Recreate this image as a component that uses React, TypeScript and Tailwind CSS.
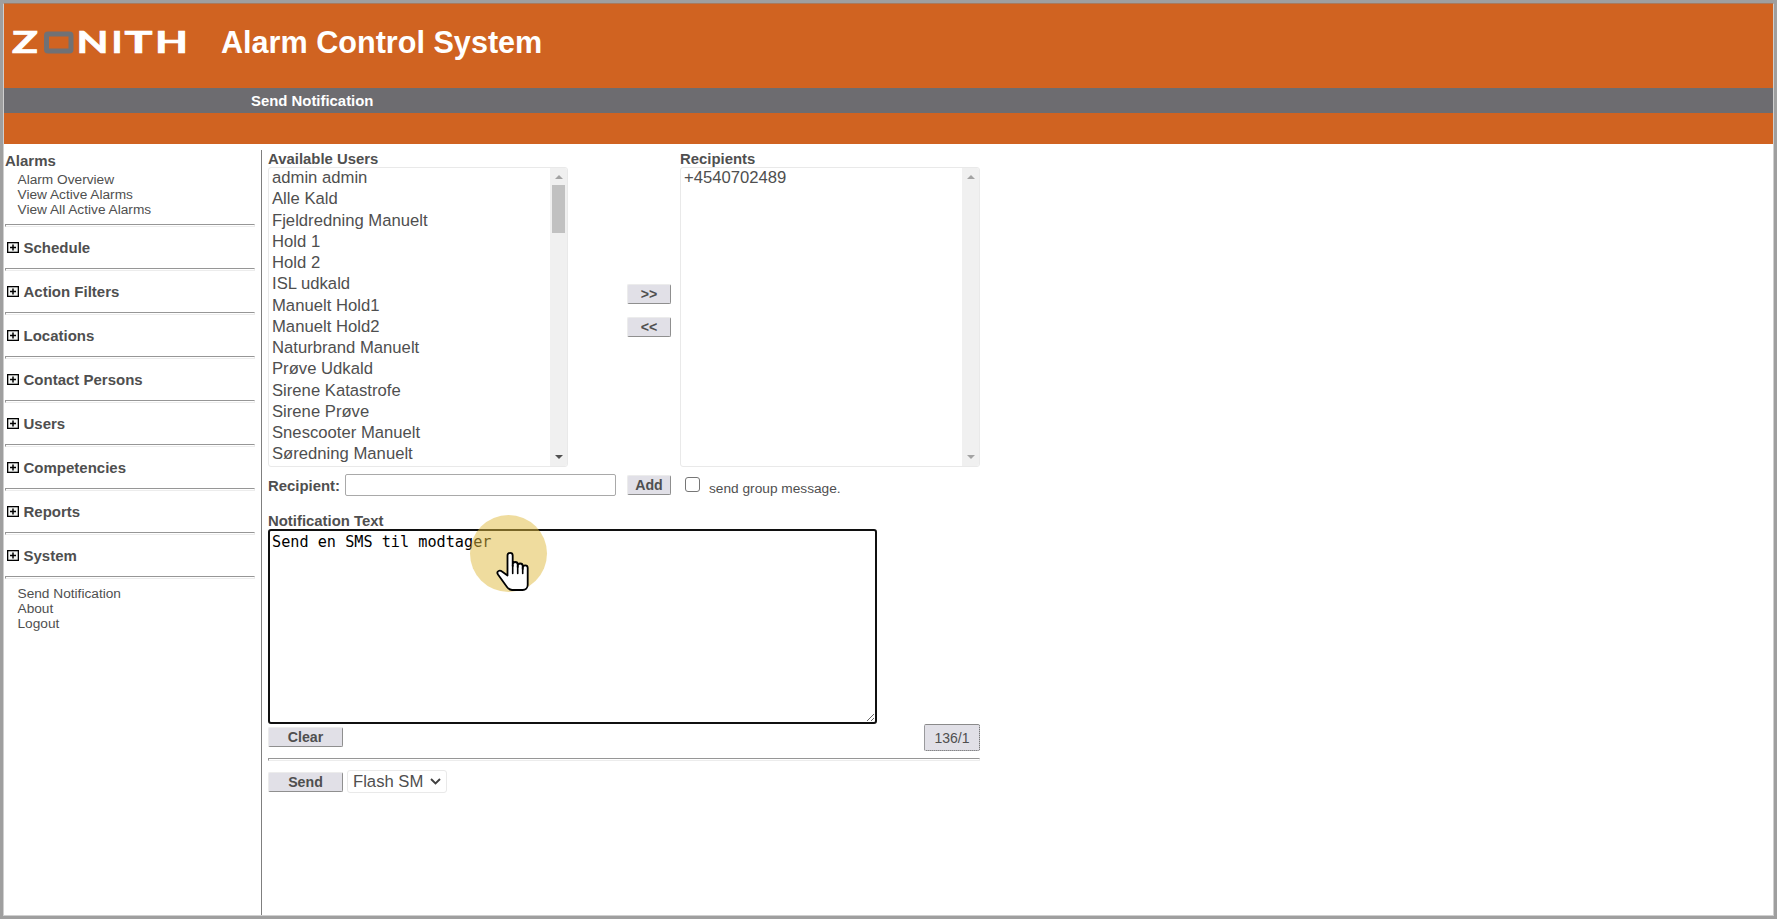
import React, { useState } from "react";

const SECTIONS = [
  "Schedule",
  "Action Filters",
  "Locations",
  "Contact Persons",
  "Users",
  "Competencies",
  "Reports",
  "System",
];

const USERS = [
  "admin admin",
  "Alle Kald",
  "Fjeldredning Manuelt",
  "Hold 1",
  "Hold 2",
  "ISL udkald",
  "Manuelt Hold1",
  "Manuelt Hold2",
  "Naturbrand Manuelt",
  "Prøve Udkald",
  "Sirene Katastrofe",
  "Sirene Prøve",
  "Snescooter Manuelt",
  "Søredning Manuelt",
];

function Logo() {
  return (
    <svg
      width="184"
      height="50"
      viewBox="-4 0 184 50"
      fill="#fff"
      stroke="#fff"
      strokeWidth="0.7"
      fontFamily="Lato, sans-serif"
      fontWeight="700"
      fontSize="30"
      aria-label="ZONITH"
    >
      <text x="0" y="36" textLength="26" lengthAdjust="spacingAndGlyphs">Z</text>
      <rect x="34.5" y="17" width="24.5" height="17" rx="1.5" fill="none" stroke="#707175" strokeWidth="5" />
      <text x="64.500" y="36" textLength="32" lengthAdjust="spacingAndGlyphs">N</text>
      <text x="99.500" y="36" textLength="11" lengthAdjust="spacingAndGlyphs">I</text>
      <text x="112.500" y="36" textLength="28" lengthAdjust="spacingAndGlyphs">T</text>
      <text x="143" y="36" textLength="33" lengthAdjust="spacingAndGlyphs">H</text>
    </svg>
  );
}

function Rule({ className = "" }: { className?: string }) {
  return (
    <div
      className={`h-[3px] shrink-0 border border-t-[#969696] border-r-[#ececec] border-b-[#ececec] border-l-[#969696] ${className}`}
    />
  );
}

function PlusBox() {
  return (
    <svg width="12" height="11" viewBox="0 0 12 11" className="shrink-0">
      <rect x="0.65" y="0.65" width="10.7" height="9.7" fill="#f4f6f4" stroke="#000" strokeWidth="1.3" />
      <path d="M3 5.5h6M6 2.500v6" stroke="#000" strokeWidth="1.5" />
    </svg>
  );
}

function Btn({ children, className = "" }: { children: React.ReactNode; className?: string }) {
  return (
    <button
      className={`flex h-5 items-center justify-center rounded-[2px] border border-t-[#ececec] border-r-[#8f8f8f] border-b-[#8f8f8f] border-l-[#ececec] bg-[#e1e0e7] pb-px text-[14.2px] leading-4 font-bold ${className}`}
    >
      {children}
    </button>
  );
}

function Heading({ children, className = "" }: { children: React.ReactNode; className?: string }) {
  return <h3 className={`pt-px text-[14.9px] leading-[16px] font-bold ${className}`}>{children}</h3>;
}

function ListBox({ items, scrollable }: { items: string[]; scrollable?: boolean }) {
  return (
    <div className="flex h-[300px] w-[300px] overflow-hidden rounded-[3px] border border-[#e9e9e9]">
      <ul className="flex-1 pl-[3px] text-[16.67px]">
        {items.map((item) => (
          <li key={item} className="h-[21.25px] leading-[19px] whitespace-nowrap">
            {item}
          </li>
        ))}
      </ul>
      <div className="flex w-[17px] flex-col items-center justify-between bg-[#f0f0f0] pt-[7px] pb-[7px]">
        <div className="flex flex-col items-center">
          <svg width="8" height="4" viewBox="0 0 8 4">
            <path d="M4 0l4 4H0z" fill="#a3a3a3" />
          </svg>
          {scrollable && <div className="mt-[6px] h-12 w-[13px] bg-[#c1c1c1]" />}
        </div>
        <svg width="8" height="4" viewBox="0 0 8 4">
          <path d="M0 0h8L4 4z" fill={scrollable ? "#505050" : "#a3a3a3"} />
        </svg>
      </div>
    </div>
  );
}

function Pointer() {
  return (
    <div className="pointer-events-none absolute top-[-14px] left-[202px] h-[78px] w-[78px]">
      <div className="h-[77px] w-[77px] rounded-full bg-[#e0b93d]/50" />
      <svg className="absolute top-[36px] left-[26px]" width="34" height="41" viewBox="0 0 34 41">
        <path
          d="M11.5 24.5V4.5a2.6 2.6 0 0 1 5.2 0V15v-1.500a2.500 2.500 0 0 1 5 0V16v-1a2.500 2.500 0 0 1 5 0v3-1.200a2.500 2.500 0 0 1 5 0V34a5 5 0 0 1-5 5H16a7 7 0 0 1-5-3L2 23.500c-2-3 1.500-5 4-3z"
          fill="#fff"
          stroke="#000"
          strokeWidth="1.8"
          strokeLinejoin="round"
        />
        <path d="M16.700 14v8.500M21.700 15v7.500M26.700 16v6.500" stroke="#000" strokeWidth="1.600" strokeLinecap="round" />
      </svg>
    </div>
  );
}

export default function App() {
  const [text, setText] = useState("Send en SMS til modtager");

  return (
    <div className="h-[919px] w-[1777px] overflow-hidden border-[3px] border-[#9f9f9f] bg-white font-['Liberation_Sans',Arial,sans-serif] text-[#4f4f4f]">
      <div className="flex h-full flex-col border border-[#cfcfcf] border-t-[#a97a5d]">
        <header className="shrink-0 bg-[#d06321] text-white">
          <div className="flex h-[84px] items-start pl-1">
            <div className="pt-[13px]">
              <Logo />
            </div>
            <h1 className="ml-[29px] pt-[20px] text-[30.6px] leading-9 font-bold whitespace-nowrap">
              Alarm Control System
            </h1>
          </div>
          <div className="h-[25px] bg-[#6d6c70] pt-px pl-[247px] text-[14.9px] leading-[24px] font-bold">
            Send Notification
          </div>
          <div className="h-[31px]" />
        </header>

        <div className="flex min-h-0 flex-1 pt-[6px]">
          <nav className="flex w-[257px] shrink-0 flex-col pr-[6px] pl-px">
            <h2 className="mt-[2px] text-[15px] leading-[18px] font-bold">Alarms</h2>
            <ul className="mt-[2px] mb-[7px] pl-[12.5px] text-[13.7px] leading-[15px]">
              <li>Alarm Overview</li>
              <li>View Active Alarms</li>
              <li>View All Active Alarms</li>
            </ul>
            {SECTIONS.map((name) => (
              <div key={name}>
                <Rule />
                <div className="flex h-[41px] items-center gap-[4.5px] pl-[2px] text-[15px] font-bold">
                  <PlusBox />
                  <span className="leading-[18px]">{name}</span>
                </div>
              </div>
            ))}
            <Rule />
            <ul className="mt-[7px] pl-[12.5px] text-[13.7px] leading-[15px]">
              <li>Send Notification</li>
              <li>About</li>
              <li>Logout</li>
            </ul>
          </nav>

          <main className="flex-1 border-l border-[#7f7f7f] pl-[6px]">
            <div className="w-[712px]">
              <div className="flex">
                <section>
                  <Heading>Available Users</Heading>
                  <ListBox items={USERS} scrollable />
                </section>
                <div className="ml-[59px] flex w-[53px] flex-col gap-[13px] pt-[134px]">
                  <Btn className="w-11">&gt;&gt;</Btn>
                  <Btn className="w-11">&lt;&lt;</Btn>
                </div>
                <section>
                  <Heading>Recipients</Heading>
                  <ListBox items={["+4540702489"]} />
                </section>
              </div>

              <div className="mt-[7px] flex h-[22px] items-start">
                <label className="w-[77px] text-[14.9px] leading-[25px] font-bold">Recipient:</label>
                <input className="h-[22px] w-[271px] rounded-[2px] border border-[#a9a9a9] outline-none" />
                <Btn className="mt-px ml-[11px] w-11">Add</Btn>
                <span className="mt-[3px] ml-[14px] h-[15px] w-[15px] rounded-[3px] border border-[#767676]" />
                <span className="ml-[9px] pt-[3px] text-[13.7px] leading-[24px]">send group message.</span>
              </div>

              <Heading className="mt-[16px]">Notification Text</Heading>
              <div className="relative h-[195px] w-[609px]">
                <textarea
                  className="block h-[195px] w-[609px] rounded-[3px] border-2 border-[#101010] px-[2px] py-px font-['DejaVu_Sans_Mono',monospace] text-[15.2px] leading-[20px] text-black outline-none"
                  value={text}
                  onChange={(e) => setText(e.target.value)}
                />
                <Pointer />
              </div>

              <div className="flex items-start justify-between">
                <Btn className="mt-[3px] w-[75px]">Clear</Btn>
                <div className="flex h-[27px] w-14 items-center justify-center rounded-[2px] border border-dotted border-[#555] border-t-[#8a8a8a] bg-[#e1e0e7] pt-[2px] text-[14px] [border-top-style:solid]">
                  136/1
                </div>
              </div>
              <Rule className="mt-[7px]" />
              <div className="mt-[10px] flex items-start gap-1">
                <Btn className="mt-px w-[75px]">Send</Btn>
                <div className="-mt-px flex h-[23px] w-[100px] items-center rounded-[3px] border border-[#e9e9e9] pl-[5px] text-[16.67px] leading-5">
                  <span className="w-[77px]">Flash SM</span>
                  <svg width="11" height="7" viewBox="0 0 11 7" fill="none">
                    <path d="M1 1l4.500 4.500L10 1" stroke="#404040" strokeWidth="1.900" />
                  </svg>
                </div>
              </div>
            </div>
          </main>
        </div>
      </div>
    </div>
  );
}
